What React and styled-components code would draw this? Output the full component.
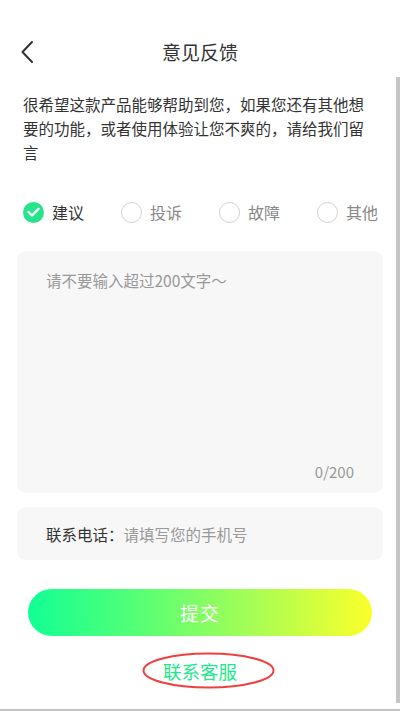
import React, { useState } from "react";
import styled, { createGlobalStyle } from "styled-components";

const Global = createGlobalStyle`
  html, body { margin: 0; padding: 0; background: #fff; }
  body { font-family: "Noto Sans CJK SC", "Noto Sans", Roboto, sans-serif; }
  * { box-sizing: border-box; }
`;

const Page = styled.div`
  position: relative;
  width: 400px;
  height: 711px;
  overflow: hidden;
  background: #fff;
  display: flex;
  flex-direction: column;
`;

const Header = styled.div`
  margin-top: 30px;
  height: 44px;
  display: flex;
  align-items: center;
  justify-content: center;
  position: relative;
`;

const BackBtn = styled.button`
  position: absolute;
  left: 14px;
  top: 8px;
  width: 26px;
  height: 28px;
  border: none;
  background: none;
  padding: 0;
  display: flex;
  align-items: center;
  justify-content: center;
`;

const Title = styled.h1`
  margin: 0;
  font-size: 19px;
  font-weight: 400;
  color: #333;
  line-height: 44px;
`;

const Intro = styled.p`
  margin: 18px 25px 0 23px;
  font-size: 15.5px;
  line-height: 24px;
  color: #333;
`;

const RadioRow = styled.div`
  margin: 36px 22px 0 23px;
  height: 24px;
  display: flex;
  justify-content: space-between;
  align-items: center;
`;

const RadioItem = styled.label`
  display: flex;
  align-items: center;
  gap: 8px;
  font-size: 16px;
  line-height: 24px;
  color: ${(p) => (p.$active ? "#333" : "#888")};
  cursor: pointer;
`;

const Circle = styled.span`
  width: 21px;
  height: 21px;
  border-radius: 50%;
  border: ${(p) => (p.$active ? "none" : "1.6px solid #d0d0d0")};
  background: ${(p) => (p.$active ? "#27e38b" : "#fff")};
  display: flex;
  align-items: center;
  justify-content: center;
`;

const Card = styled.div`
  margin: 0 17px;
  background: #f7f7f7;
  border-radius: 9px;
`;

const TextCard = styled(Card)`
  margin-top: 27px;
  height: 242px;
  padding: 18px 29px 10px 29px;
  display: flex;
  flex-direction: column;
`;

const TextArea = styled.textarea`
  flex: 1;
  border: none;
  background: transparent;
  resize: none;
  outline: none;
  padding: 0;
  font-family: inherit;
  font-size: 15.5px;
  line-height: 22px;
  color: #333;
  &::placeholder { color: #999; }
`;

const Counter = styled.div`
  text-align: right;
  font-size: 15px;
  line-height: 22px;
  color: #999;
`;

const PhoneCard = styled(Card)`
  margin-top: 14px;
  height: 53px;
  padding: 0 29px;
  display: flex;
  align-items: center;
`;

const PhoneLabel = styled.span`
  font-size: 15.5px;
  color: #333;
  white-space: nowrap;
`;

const PhoneInput = styled.input`
  flex: 1;
  border: none;
  background: transparent;
  outline: none;
  padding: 0;
  font-family: inherit;
  font-size: 15.5px;
  color: #333;
  &::placeholder { color: #999; }
`;

const SubmitBtn = styled.button`
  margin: 29px 28px 0;
  height: 47px;
  border: none;
  border-radius: 24px;
  background: linear-gradient(90deg, #12ff95 0%, #5dff73 35%, #a6fd55 65%, #fbff2b 100%);
  color: #fff;
  font-family: inherit;
  font-size: 19px;
  letter-spacing: 1px;
`;

const ContactWrap = styled.div`
  margin-top: 22px;
  display: flex;
  justify-content: center;
`;

const Contact = styled.a`
  position: relative;
  font-size: 18.5px;
  line-height: 26px;
  color: #1de98b;
  text-decoration: none;
`;

const Ring = styled.svg`
  position: absolute;
  left: -21px;
  top: -6px;
  pointer-events: none;
`;

const ScrollThumb = styled.div`
  position: absolute;
  right: 0;
  top: 77px;
  width: 4px;
  height: 626px;
  background: #c6c6c6;
`;

const BottomEdge = styled.div`
  position: absolute;
  left: 0;
  right: 0;
  bottom: 0;
  height: 2px;
  background: #c4c4c4;
`;

const options = ["建议", "投诉", "故障", "其他"];

export default function App() {
  const [sel, setSel] = useState(0);
  return (
    <Page>
      <Global />
      <Header>
        <BackBtn aria-label="返回">
          <svg width="14" height="24" viewBox="0 0 14 24">
            <path d="M12 2 L2.5 12 L12 22" fill="none" stroke="#333" strokeWidth="2" strokeLinecap="round" strokeLinejoin="round" />
          </svg>
        </BackBtn>
        <Title>意见反馈</Title>
      </Header>
      <Intro>很希望这款产品能够帮助到您，如果您还有其他想要的功能，或者使用体验让您不爽的，请给我们留言</Intro>
      <RadioRow>
        {options.map((o, i) => (
          <RadioItem key={o} $active={sel === i} onClick={() => setSel(i)}>
            <Circle $active={sel === i}>
              {sel === i && (
                <svg width="13" height="10" viewBox="0 0 13 10">
                  <path d="M1.5 5 L5 8.5 L11.5 1.8" fill="none" stroke="#fff" strokeWidth="2.4" strokeLinecap="round" strokeLinejoin="round" />
                </svg>
              )}
            </Circle>
            {o}
          </RadioItem>
        ))}
      </RadioRow>
      <TextCard>
        <TextArea placeholder="请不要输入超过200文字～" maxLength={200} />
        <Counter>0/200</Counter>
      </TextCard>
      <PhoneCard>
        <PhoneLabel>联系电话：</PhoneLabel>
        <PhoneInput placeholder="请填写您的手机号" />
      </PhoneCard>
      <SubmitBtn>提交</SubmitBtn>
      <ContactWrap>
        <Contact>
          联系客服
          <Ring width="133" height="37" viewBox="0 0 133 37">
            <ellipse cx="66.5" cy="18.5" rx="65" ry="17" fill="none" stroke="#ef3f3f" strokeWidth="2" />
          </Ring>
        </Contact>
      </ContactWrap>
      <ScrollThumb />
      <BottomEdge />
    </Page>
  );
}
